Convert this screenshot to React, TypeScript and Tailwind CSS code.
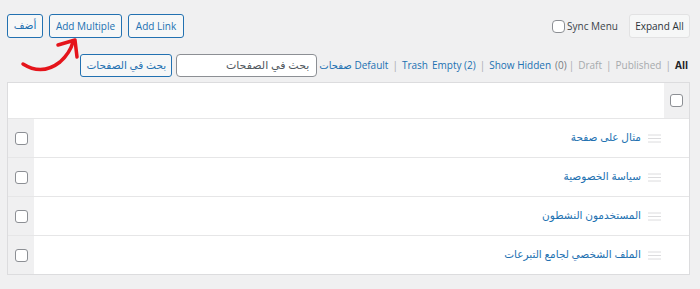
import { useState } from "react";

const rows = [
  "مثال على صفحة",
  "سياسة الخصوصية",
  "المستخدمون النشطون",
  "الملف الشخصي لجامع التبرعات",
];

function Box({ className = "" }: { className?: string }) {
  return (
    <span
      className={`inline-block w-[13px] h-[13px] rounded-[3px] border border-[#8c8f94] bg-white ${className}`}
    />
  );
}

function Grip() {
  return (
    <svg width="13" height="9" viewBox="0 0 13 9" className="shrink-0">
      <path d="M0 1h13M0 4.5h13M0 8h13" stroke="#dcdcde" strokeWidth="1" />
    </svg>
  );
}

export default function App() {
  const [sync, setSync] = useState(false);

  return (
    <div
      className="relative w-[700px] h-[289px] bg-[#f0f0f1] pl-[7px] pr-[10px] pt-[14px] text-[10px] text-[#3c434a]"
      style={{ fontFamily: '"Open Sans", "DejaVu Sans", sans-serif' }}
    >
      {/* top toolbar */}
      <div className="flex items-center justify-between">
        <div className="flex items-center gap-[6px]">
          <button className="h-[24px] w-[36px] rounded-[3px] border border-[#2271b1] bg-[#f6f7f7] text-[#2271b1] text-[10.5px]">
            أضف
          </button>
          <button className="h-[24px] w-[73px] rounded-[3px] border border-[#2271b1] bg-[#f6f7f7] text-[#2271b1]">
            Add Multiple
          </button>
          <button className="h-[24px] w-[56px] rounded-[3px] border border-[#2271b1] bg-[#f6f7f7] text-[#2271b1]">
            Add Link
          </button>
        </div>
        <div className="flex items-center">
          <label className="flex items-center gap-[2px] mr-[11px] cursor-pointer" onClick={() => setSync(!sync)}>
            <span className="inline-block w-[13px] h-[13px] rounded-[4px] border border-[#8c8f94] bg-white" />
            <span>Sync Menu</span>
          </label>
          <button className="h-[24px] w-[61px] rounded-[3px] border border-[#e2e2e3] bg-[#f6f7f7] text-[#2c3338]">
            Expand All
          </button>
        </div>
      </div>

      {/* filter row */}
      <div className="flex items-center justify-end mt-[16px] pr-[2px]">
        <button className="h-[23px] w-[92px] rounded-[3px] border border-[#2271b1] bg-[#f6f7f7] text-[#2271b1] text-[10.5px]">
          بحث في الصفحات
        </button>
        <div className="ml-[4px] h-[23px] w-[141px] rounded-[4px] border border-[#8c8f94] bg-white flex items-center justify-end pr-[7px] text-[#50575e] text-[11px]">
          بحث في الصفحات
        </div>
        <div className="ml-[2px] flex items-center gap-[4px] whitespace-nowrap">
          <span className="text-[#2271b1]">صفحات Default</span>
          <span className="text-[#a7aaad]">|</span>
          <span className="text-[#2271b1]">Trash</span>
          <span className="text-[#2271b1]">Empty (2)</span>
          <span className="text-[#a7aaad]">|</span>
          <span className="text-[#2271b1]">Show Hidden</span>
          <span className="text-[#787c82]">(0)</span>
          <span className="text-[#a7aaad] -ml-[2px]">|</span>
          <span className="text-[#a7aaad]">Draft</span>
          <span className="text-[#a7aaad]">|</span>
          <span className="text-[#a7aaad]">Published</span>
          <span className="text-[#a7aaad]">|</span>
          <span className="font-bold text-[#1d2327]">All</span>
        </div>
      </div>

      {/* pages table */}
      <div className="mt-[5px] border border-[#dcdcde] bg-white">
        <div className="flex h-[35px]">
          <div className="flex-1" />
          <div className="w-[25px] bg-[#f0f0f1] flex items-center justify-center">
            <Box />
          </div>
        </div>
        {rows.map((title) => (
          <div key={title} className="flex h-[39px] border-t border-[#e6e6e7]">
            <div className="w-[26px] bg-[#f0f0f1] flex items-center justify-center">
              <Box />
            </div>
            <div className="flex-1 flex items-center justify-end gap-[7px] pr-[28px]">
              <span className="text-[#2271b1] text-[10.5px]">{title}</span>
              <Grip />
            </div>
          </div>
        ))}
      </div>

      {/* red annotation arrow */}
      <svg className="absolute left-0 top-0 pointer-events-none" width="100" height="90" viewBox="0 0 100 90">
        <path
          d="M23 64 Q42 76 60 62 Q70 53 73 42"
          fill="none"
          stroke="#e5141b"
          strokeWidth="3.5"
          strokeLinecap="round"
        />
        <path
          d="M58 45 L75 40 L77 57"
          fill="none"
          stroke="#e5141b"
          strokeWidth="3.5"
          strokeLinecap="round"
          strokeLinejoin="round"
        />
      </svg>
    </div>
  );
}
